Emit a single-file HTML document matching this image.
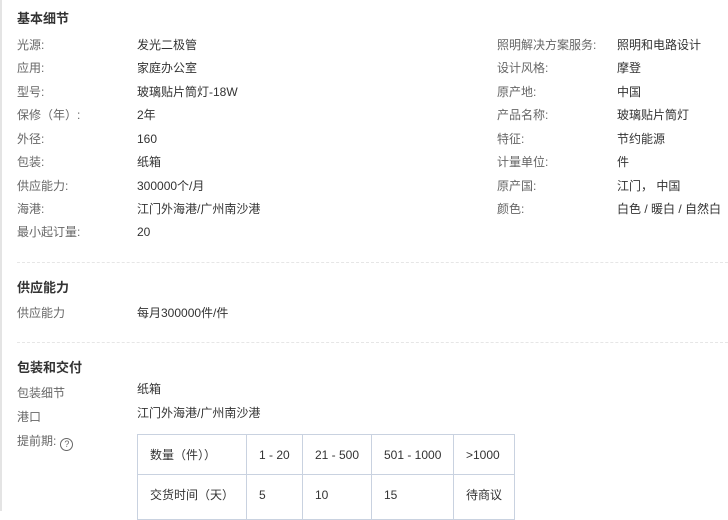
<!DOCTYPE html>
<html><head><meta charset="utf-8"><style>
*{margin:0;padding:0;box-sizing:border-box}
body{width:728px;height:511px;overflow:hidden;background:#fff;font-family:"Liberation Sans","Noto Sans CJK SC",sans-serif;font-size:12px;color:#333;position:relative}
.bl{position:absolute;left:0;top:0;width:2px;height:100%;background:#e4e4e4}
.t{position:absolute;white-space:nowrap;line-height:16px}
.l{color:#666}
.h{font-size:13px;font-weight:bold;color:#333}
.d{position:absolute;left:17px;right:0;border-top:1px dashed #e6e6e6}
table{position:absolute;left:137px;top:434px;border-collapse:collapse}
td{border:1px solid #c9d2e0;height:40px;padding:0 0 0 12px;font-size:12px;color:#333;white-space:nowrap}
tr.r2 td{height:45px;padding-bottom:5px}
.q{display:inline-block;width:13px;height:13px;border:1px solid #666;border-radius:50%;font-size:9px;line-height:11px;text-align:center;color:#666;vertical-align:-2px;margin-left:4px}
</style></head><body>
<div class="bl"></div>
<div class="t h" style="left:17px;top:11px">基本细节</div>
<div class="t l" style="left:17px;top:37px">光源:</div><div class="t" style="left:137px;top:37px">发光二极管</div>
<div class="t l" style="left:17px;top:60px">应用:</div><div class="t" style="left:137px;top:60px">家庭办公室</div>
<div class="t l" style="left:17px;top:84px">型号:</div><div class="t" style="left:137px;top:84px">玻璃贴片筒灯-18W</div>
<div class="t l" style="left:17px;top:107px">保修（年）:</div><div class="t" style="left:137px;top:107px">2年</div>
<div class="t l" style="left:17px;top:131px">外径:</div><div class="t" style="left:137px;top:131px">160</div>
<div class="t l" style="left:17px;top:154px">包装:</div><div class="t" style="left:137px;top:154px">纸箱</div>
<div class="t l" style="left:17px;top:178px">供应能力:</div><div class="t" style="left:137px;top:178px">300000个/月</div>
<div class="t l" style="left:17px;top:201px">海港:</div><div class="t" style="left:137px;top:201px">江门外海港/广州南沙港</div>
<div class="t l" style="left:17px;top:224px">最小起订量:</div><div class="t" style="left:137px;top:224px">20</div>

<div class="t l" style="left:497px;top:37px">照明解决方案服务:</div><div class="t" style="left:617px;top:37px">照明和电路设计</div>
<div class="t l" style="left:497px;top:60px">设计风格:</div><div class="t" style="left:617px;top:60px">摩登</div>
<div class="t l" style="left:497px;top:84px">原产地:</div><div class="t" style="left:617px;top:84px">中国</div>
<div class="t l" style="left:497px;top:107px">产品名称:</div><div class="t" style="left:617px;top:107px">玻璃贴片筒灯</div>
<div class="t l" style="left:497px;top:131px">特征:</div><div class="t" style="left:617px;top:131px">节约能源</div>
<div class="t l" style="left:497px;top:154px">计量单位:</div><div class="t" style="left:617px;top:154px">件</div>
<div class="t l" style="left:497px;top:178px">原产国:</div><div class="t" style="left:617px;top:178px">江门， 中国</div>
<div class="t l" style="left:497px;top:201px">颜色:</div><div class="t" style="left:617px;top:201px">白色 / 暖白 / 自然白</div>

<div class="d" style="top:262px"></div>
<div class="t h" style="left:17px;top:280px">供应能力</div>
<div class="t l" style="left:17px;top:305px">供应能力</div><div class="t" style="left:137px;top:305px">每月300000件/件</div>
<div class="d" style="top:342px"></div>
<div class="t h" style="left:17px;top:360px">包装和交付</div>
<div class="t l" style="left:17px;top:385px">包装细节</div><div class="t" style="left:137px;top:381px">纸箱</div>
<div class="t l" style="left:17px;top:409px">港口</div><div class="t" style="left:137px;top:405px">江门外海港/广州南沙港</div>
<div class="t l" style="left:17px;top:433px">提前期:<span class="q">?</span></div>
<table>
<tr><td style="width:109px">数量（件））</td><td style="width:56px">1 - 20</td><td style="width:69px">21 - 500</td><td style="width:82px">501 - 1000</td><td style="width:61px">&gt;1000</td></tr>
<tr class="r2"><td>交货时间（天）</td><td>5</td><td>10</td><td>15</td><td>待商议</td></tr>
</table>
</body></html>
